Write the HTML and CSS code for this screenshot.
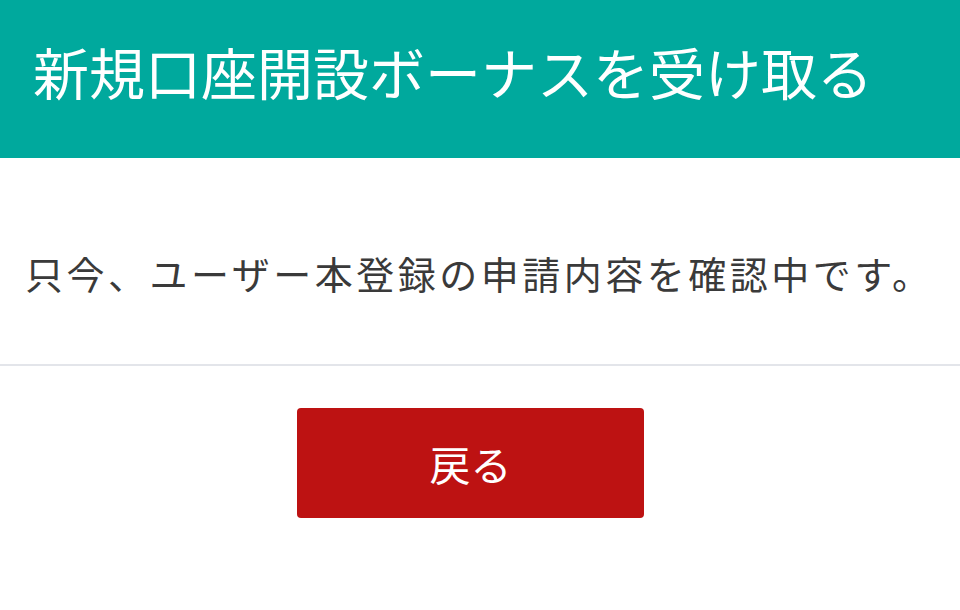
FILE: index.html
```html
<!DOCTYPE html>
<html lang="ja">
<head>
    <meta charset="UTF-8">
    <meta name="viewport" content="width=device-width, initial-scale=1.0">
    <title>新規口座開設ボーナス</title>
    <link rel="stylesheet" href="styles.css">
</head>
<body>
    <header class="page-header">
        <h1 class="page-title">新規口座開設ボーナスを受け取る</h1>
    </header>

    <div class="message">
        <p>只今、ユーザー本登録の申請内容を確認中です。</p>
    </div>

    <div class="actions">
        <button class="back-btn" onclick="history.back()">戻る</button>
    </div>
</body>
</html>
```

FILE: styles.css
```css
body {
    margin: 0;
    background-color: #ffffff;
    color: #3a3a3a;
    font-family: "Noto Sans CJK JP", "Noto Sans", sans-serif;
}

.page-header {
    height: 158px;
    box-sizing: border-box;
    display: flex;
    align-items: center;
    padding: 0 0 16px 33px;
    background-color: #00a99d;
}

.page-title {
    margin: 0;
    color: #ffffff;
    font-size: 56px;
    font-weight: normal;
    line-height: 1.2;
}

.message {
    padding: 86px 0 63px 25px;
    border-bottom: 2px solid #e3e5ea;
}

.message p {
    margin: 0;
    font-size: 38px;
    line-height: 57px;
    letter-spacing: 3.5px;
}

.actions {
    display: flex;
    justify-content: center;
    padding: 42px 19px 0 0;
}

.back-btn {
    width: 347px;
    height: 110px;
    border: none;
    border-radius: 4px;
    background-color: #bd1212;
    color: #ffffff;
    font-family: "Noto Sans CJK JP", sans-serif;
    font-size: 41px;
    cursor: pointer;
}
```
